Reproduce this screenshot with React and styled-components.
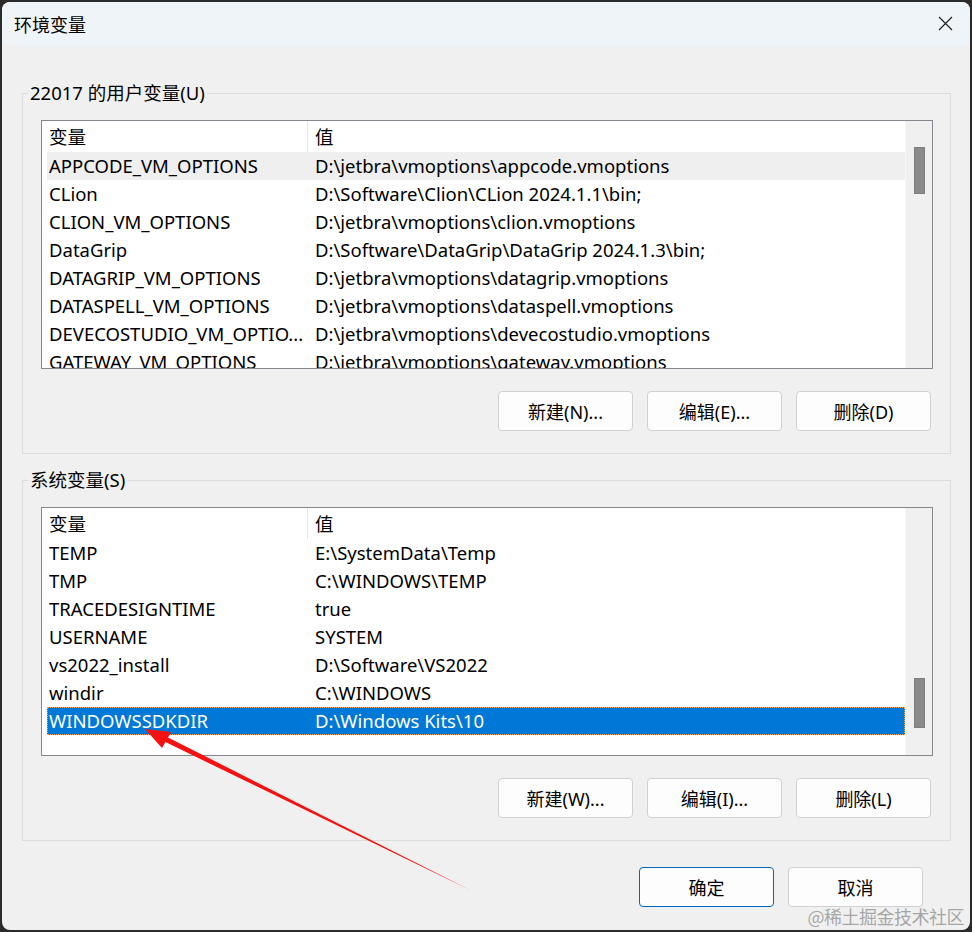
import React from 'react';
import styled, { createGlobalStyle } from 'styled-components';

const GlobalStyle = createGlobalStyle`
    html, body {
        margin: 0;
        padding: 0;
        background: #2b2b2b;
    }
    body {
        font-family: 'Noto Sans', 'Noto Sans CJK SC', sans-serif;
        color: #000000;
    }
`;

const Page = styled.div`
    width: 972px;
    height: 932px;
    position: relative;
    padding: 2px;
    box-sizing: border-box;
`;

const Window = styled.div`
    width: 968px;
    height: 928px;
    background: #f0f0f0;
    border-radius: 8px;
    overflow: hidden;
    display: flex;
    flex-direction: column;
`;

const TitleBar = styled.div`
    height: 43px;
    flex-shrink: 0;
    background: #eff4f9;
    display: flex;
    align-items: center;
    justify-content: space-between;
    padding: 0 17px 0 12px;
    font-size: 18px;
`;

const Body = styled.div`
    display: flex;
    flex-direction: column;
    padding: 0 19px 0 20px;
`;

const GroupBox = styled.div`
    border: 1px solid #dcdcdc;
    margin-top: ${(p) => p.$top}px;
    padding: 0 17px 22px 18px;
    display: flex;
    flex-direction: column;
`;

const Legend = styled.div`
    align-self: flex-start;
    height: 24px;
    line-height: 24px;
    margin: -13px 0 0 -13px;
    padding: 0 2px;
    background: #f0f0f0;
    font-size: 18.5px;
`;

const List = styled.div`
    margin-top: 15px;
    height: 249px;
    box-sizing: border-box;
    border: 1px solid #84878d;
    background: #ffffff;
    display: flex;
    overflow: hidden;
`;

const Rows = styled.div`
    flex: 1;
    display: flex;
    flex-direction: column;
    font-size: 18.5px;
`;

const HeaderRow = styled.div`
    display: grid;
    grid-template-columns: 266px 1fr;
    height: 31px;
    line-height: 31px;
    flex-shrink: 0;

    & > div {
        padding-left: 7px;
    }
    & > div:first-child {
        border-right: 1px solid #e5e5e5;
    }
`;

const Row = styled.div`
    display: grid;
    grid-template-columns: 261px 1fr;
    height: 28px;
    line-height: 28px;
    flex-shrink: 0;
    margin-left: 5px;
    box-sizing: border-box;
    white-space: nowrap;
    background: ${(p) => (p.$selected ? '#0078d7' : p.$hover ? '#efefef' : 'transparent')};
    color: ${(p) => (p.$selected ? '#ffffff' : '#000000')};
    outline: ${(p) => (p.$selected ? '1px dotted #f2a25a' : 'none')};
    outline-offset: -1px;
`;

const Name = styled.div`
    padding-left: 2px;
    overflow: hidden;
`;

const Value = styled.div`
    padding-left: 7px;
    overflow: hidden;
`;

const Scrollbar = styled.div`
    width: 27px;
    flex-shrink: 0;
    background: #f0f0f0;
    border-left: 1px solid #f7f7f7;
    box-sizing: border-box;
    padding-top: ${(p) => p.$thumbTop}px;
    display: flex;
    justify-content: center;
`;

const Thumb = styled.div`
    width: 11px;
    height: ${(p) => p.$h}px;
    background: #8a8a8a;
    border: 1px solid #7e7e7e;
    box-sizing: border-box;
`;

const ButtonRow = styled.div`
    display: flex;
    justify-content: flex-end;
    gap: 14px;
    margin-top: ${(p) => p.$top}px;
    margin-right: ${(p) => p.$right}px;
`;

const Button = styled.button`
    width: 135px;
    height: 40px;
    border-radius: 4px;
    border: 1px solid ${(p) => (p.$primary ? '#0067c0' : '#d0d0d0')};
    background: #fdfdfd;
    font-family: 'Noto Sans', 'Noto Sans CJK SC', sans-serif;
    font-size: 18px;
    color: #000000;
    padding: 0;
`;

const Overlay = styled.svg`
    position: absolute;
    left: 0;
    top: 0;
    pointer-events: none;
`;

const Watermark = styled.div`
    position: absolute;
    right: 8px;
    bottom: 3px;
    font-size: 18px;
    color: rgba(140, 140, 140, 0.75);
    font-family: 'Noto Sans CJK SC', sans-serif;
    letter-spacing: -0.5px;
`;

const userVars = [
    ['APPCODE_VM_OPTIONS', 'D:\\jetbra\\vmoptions\\appcode.vmoptions'],
    ['CLion', 'D:\\Software\\Clion\\CLion 2024.1.1\\bin;'],
    ['CLION_VM_OPTIONS', 'D:\\jetbra\\vmoptions\\clion.vmoptions'],
    ['DataGrip', 'D:\\Software\\DataGrip\\DataGrip 2024.1.3\\bin;'],
    ['DATAGRIP_VM_OPTIONS', 'D:\\jetbra\\vmoptions\\datagrip.vmoptions'],
    ['DATASPELL_VM_OPTIONS', 'D:\\jetbra\\vmoptions\\dataspell.vmoptions'],
    ['DEVECOSTUDIO_VM_OPTIO...', 'D:\\jetbra\\vmoptions\\devecostudio.vmoptions'],
    ['GATEWAY_VM_OPTIONS', 'D:\\jetbra\\vmoptions\\gateway.vmoptions'],
];

const systemVars = [
    ['TEMP', 'E:\\SystemData\\Temp'],
    ['TMP', 'C:\\WINDOWS\\TEMP'],
    ['TRACEDESIGNTIME', 'true'],
    ['USERNAME', 'SYSTEM'],
    ['vs2022_install', 'D:\\Software\\VS2022'],
    ['windir', 'C:\\WINDOWS'],
    ['WINDOWSSDKDIR', 'D:\\Windows Kits\\10'],
];

function VarList({ items, hover, selected, thumbTop, thumbH }) {
    return (
        <List>
            <Rows>
                <HeaderRow>
                    <div>变量</div>
                    <div>值</div>
                </HeaderRow>
                {items.map(([name, value], i) => (
                    <Row key={name} $hover={i === hover} $selected={i === selected}>
                        <Name>{name}</Name>
                        <Value>{value}</Value>
                    </Row>
                ))}
            </Rows>
            <Scrollbar $thumbTop={thumbTop}>
                <Thumb $h={thumbH} />
            </Scrollbar>
        </List>
    );
}

function CloseIcon() {
    return (
        <svg width="15" height="15" viewBox="0 0 15 15">
            <path d="M1 1L14 14M14 1L1 14" stroke="#1b1b1b" strokeWidth="1.1" />
        </svg>
    );
}

function App() {
    // arrow from tail (470,890) to tip (145,729)
    return (
        <Page>
            <GlobalStyle />
            <Window>
                <TitleBar>
                    <span>环境变量</span>
                    <CloseIcon />
                </TitleBar>
                <Body>
                    <GroupBox $top={48}>
                        <Legend>22017 的用户变量(U)</Legend>
                        <VarList items={userVars} hover={0} thumbTop={26} thumbH={47} />
                        <ButtonRow $top={22} $right={2}>
                            <Button>新建(N)...</Button>
                            <Button>编辑(E)...</Button>
                            <Button>删除(D)</Button>
                        </ButtonRow>
                    </GroupBox>
                    <GroupBox $top={26}>
                        <Legend>系统变量(S)</Legend>
                        <VarList items={systemVars} selected={6} thumbTop={170} thumbH={50} />
                        <ButtonRow $top={22} $right={2}>
                            <Button>新建(W)...</Button>
                            <Button>编辑(I)...</Button>
                            <Button>删除(L)</Button>
                        </ButtonRow>
                    </GroupBox>
                    <ButtonRow $top={26} $right={28}>
                        <Button $primary>确定</Button>
                        <Button>取消</Button>
                    </ButtonRow>
                </Body>
            </Window>
            <Overlay width="972" height="932" viewBox="0 0 972 932">
                <polygon points="145,729 171,732 168,737.5 470,890 165.4,742 162,748" fill="#f5110f" />
            </Overlay>
            <Watermark>@稀土掘金技术社区</Watermark>
        </Page>
    );
}

export default App;
